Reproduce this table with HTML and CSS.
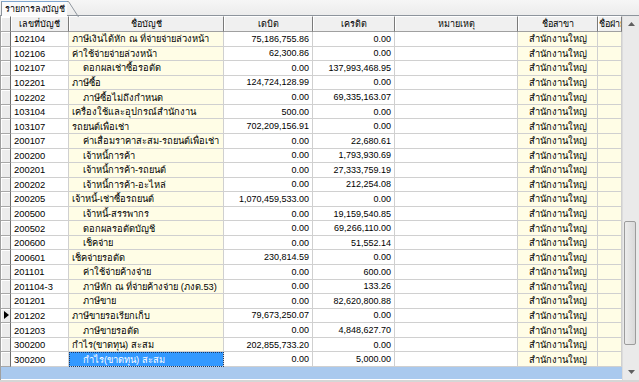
FILE: index.html
```html
<!DOCTYPE html>
<html lang="th">
<head>
<meta charset="utf-8">
<title>รายการลงบัญชี</title>
<link rel="stylesheet" href="styles.css">
</head>
<body>
<div class="window">
  <div class="tabbar">
    <div class="tab">
      <span class="tab-label">รายการลงบัญชี</span>
      <svg class="tab-edge" width="12" height="16" viewBox="0 0 12 16"><path d="M0 0.5 L1.5 0.5 L11.5 16" fill="#fbfbfb" stroke="#8d949c" stroke-width="1"/></svg>
    </div>
  </div>
  <div class="gridwrap">
    <div class="grid">
      <div class="row head">
        <div class="c ind"></div>
        <div class="c">เลขที่บัญชี</div>
        <div class="c">ชื่อบัญชี</div>
        <div class="c">เดบิต</div>
        <div class="c">เครดิต</div>
        <div class="c">หมายเหตุ</div>
        <div class="c">ชื่อสาขา</div>
        <div class="c cut">ชื่อฝ่าย</div>
      </div>

      <div class="row"><div class="c ind"></div><div class="c acc">102104</div><div class="c name">ภาษีเงินได้หัก ณ ที่จ่ายจ่ายล่วงหน้า</div><div class="c num">75,186,755.86</div><div class="c num">0.00</div><div class="c rem"></div><div class="c br">สำนักงานใหญ่</div><div class="c dv"></div></div>
      <div class="row"><div class="c ind"></div><div class="c acc">102106</div><div class="c name">ค่าใช้จ่ายจ่ายล่วงหน้า</div><div class="c num">62,300.86</div><div class="c num">0.00</div><div class="c rem"></div><div class="c br">สำนักงานใหญ่</div><div class="c dv"></div></div>
      <div class="row"><div class="c ind"></div><div class="c acc">102107</div><div class="c name in">ดอกผลเช่าซื้อรอตัด</div><div class="c num">0.00</div><div class="c num">137,993,468.95</div><div class="c rem"></div><div class="c br">สำนักงานใหญ่</div><div class="c dv"></div></div>
      <div class="row"><div class="c ind"></div><div class="c acc">102201</div><div class="c name">ภาษีซื้อ</div><div class="c num">124,724,128.99</div><div class="c num">0.00</div><div class="c rem"></div><div class="c br">สำนักงานใหญ่</div><div class="c dv"></div></div>
      <div class="row"><div class="c ind"></div><div class="c acc">102202</div><div class="c name in">ภาษีซื้อไม่ถึงกำหนด</div><div class="c num">0.00</div><div class="c num">69,335,163.07</div><div class="c rem"></div><div class="c br">สำนักงานใหญ่</div><div class="c dv"></div></div>
      <div class="row"><div class="c ind"></div><div class="c acc">103104</div><div class="c name">เครื่องใช้และอุปกรณ์สำนักงาน</div><div class="c num">500.00</div><div class="c num">0.00</div><div class="c rem"></div><div class="c br">สำนักงานใหญ่</div><div class="c dv"></div></div>
      <div class="row"><div class="c ind"></div><div class="c acc">103107</div><div class="c name">รถยนต์เพื่อเช่า</div><div class="c num">702,209,156.91</div><div class="c num">0.00</div><div class="c rem"></div><div class="c br">สำนักงานใหญ่</div><div class="c dv"></div></div>
      <div class="row"><div class="c ind"></div><div class="c acc">200107</div><div class="c name in">ค่าเสื่อมราคาสะสม-รถยนต์เพื่อเช่า</div><div class="c num">0.00</div><div class="c num">22,680.61</div><div class="c rem"></div><div class="c br">สำนักงานใหญ่</div><div class="c dv"></div></div>
      <div class="row"><div class="c ind"></div><div class="c acc">200200</div><div class="c name in">เจ้าหนี้การค้า</div><div class="c num">0.00</div><div class="c num">1,793,930.69</div><div class="c rem"></div><div class="c br">สำนักงานใหญ่</div><div class="c dv"></div></div>
      <div class="row"><div class="c ind"></div><div class="c acc">200201</div><div class="c name in">เจ้าหนี้การค้า-รถยนต์</div><div class="c num">0.00</div><div class="c num">27,333,759.19</div><div class="c rem"></div><div class="c br">สำนักงานใหญ่</div><div class="c dv"></div></div>
      <div class="row"><div class="c ind"></div><div class="c acc">200202</div><div class="c name in">เจ้าหนี้การค้า-อะไหล่</div><div class="c num">0.00</div><div class="c num">212,254.08</div><div class="c rem"></div><div class="c br">สำนักงานใหญ่</div><div class="c dv"></div></div>
      <div class="row"><div class="c ind"></div><div class="c acc">200205</div><div class="c name">เจ้าหนี้-เช่าซื้อรถยนต์</div><div class="c num">1,070,459,533.00</div><div class="c num">0.00</div><div class="c rem"></div><div class="c br">สำนักงานใหญ่</div><div class="c dv"></div></div>
      <div class="row"><div class="c ind"></div><div class="c acc">200500</div><div class="c name in">เจ้าหนี้-สรรพากร</div><div class="c num">0.00</div><div class="c num">19,159,540.85</div><div class="c rem"></div><div class="c br">สำนักงานใหญ่</div><div class="c dv"></div></div>
      <div class="row"><div class="c ind"></div><div class="c acc">200502</div><div class="c name in">ดอกผลรอตัดบัญชี</div><div class="c num">0.00</div><div class="c num">69,266,110.00</div><div class="c rem"></div><div class="c br">สำนักงานใหญ่</div><div class="c dv"></div></div>
      <div class="row"><div class="c ind"></div><div class="c acc">200600</div><div class="c name in">เช็คจ่าย</div><div class="c num">0.00</div><div class="c num">51,552.14</div><div class="c rem"></div><div class="c br">สำนักงานใหญ่</div><div class="c dv"></div></div>
      <div class="row"><div class="c ind"></div><div class="c acc">200601</div><div class="c name">เช็คจ่ายรอตัด</div><div class="c num">230,814.59</div><div class="c num">0.00</div><div class="c rem"></div><div class="c br">สำนักงานใหญ่</div><div class="c dv"></div></div>
      <div class="row"><div class="c ind"></div><div class="c acc">201101</div><div class="c name in">ค่าใช้จ่ายค้างจ่าย</div><div class="c num">0.00</div><div class="c num">600.00</div><div class="c rem"></div><div class="c br">สำนักงานใหญ่</div><div class="c dv"></div></div>
      <div class="row"><div class="c ind"></div><div class="c acc">201104-3</div><div class="c name in">ภาษีหัก ณ ที่จ่ายค้างจ่าย (ภงด.53)</div><div class="c num">0.00</div><div class="c num">133.26</div><div class="c rem"></div><div class="c br">สำนักงานใหญ่</div><div class="c dv"></div></div>
      <div class="row"><div class="c ind"></div><div class="c acc">201201</div><div class="c name in">ภาษีขาย</div><div class="c num">0.00</div><div class="c num">82,620,800.88</div><div class="c rem"></div><div class="c br">สำนักงานใหญ่</div><div class="c dv"></div></div>
      <div class="row"><div class="c ind cur"><svg width="5" height="8" viewBox="0 0 5 8"><path d="M0 0 L5 4 L0 8 Z" fill="#000"/></svg></div><div class="c acc">201202</div><div class="c name">ภาษีขายรอเรียกเก็บ</div><div class="c num">79,673,250.07</div><div class="c num">0.00</div><div class="c rem"></div><div class="c br">สำนักงานใหญ่</div><div class="c dv"></div></div>
      <div class="row"><div class="c ind"></div><div class="c acc">201203</div><div class="c name in">ภาษีขายรอตัด</div><div class="c num">0.00</div><div class="c num">4,848,627.70</div><div class="c rem"></div><div class="c br">สำนักงานใหญ่</div><div class="c dv"></div></div>
      <div class="row"><div class="c ind"></div><div class="c acc">300200</div><div class="c name">กำไร(ขาดทุน) สะสม</div><div class="c num">202,855,733.20</div><div class="c num">0.00</div><div class="c rem"></div><div class="c br">สำนักงานใหญ่</div><div class="c dv"></div></div>
      <div class="row"><div class="c ind"></div><div class="c acc">300200</div><div class="c name in sel">กำไร(ขาดทุน) สะสม</div><div class="c num">0.00</div><div class="c num">5,000.00</div><div class="c rem"></div><div class="c br">สำนักงานใหญ่</div><div class="c dv"></div></div>

      <div class="newrow"></div>
    </div>
    <div class="vscroll">
      <div class="sbtn"><svg width="7" height="4" viewBox="0 0 7 4"><path d="M0 4 L3.5 0 L7 4 Z" fill="#606060"/></svg></div>
      <div class="track">
        <div class="thumb"></div>
      </div>
      <div class="sbtn"><svg width="7" height="4" viewBox="0 0 7 4"><path d="M0 0 L3.5 4 L7 0 Z" fill="#606060"/></svg></div>
    </div>
  </div>
  <div class="bottom"></div>
</div>
</body>
</html>
```

FILE: styles.css
```css
html, body {
  margin: 0;
  padding: 0;
  background: #f0f0f0;
}

.window {
  width: 639px;
  height: 382px;
  overflow: hidden;
  font-family: "Liberation Sans", "DejaVu Sans", "Noto Sans", sans-serif;
  font-size: 8.6px;
  color: #000;
}

.tabbar {
  height: 16px;
  padding-top: 1px;
  box-sizing: border-box;
  background: linear-gradient(#f6f6f6, #ececec);
  border-bottom: 1px solid #8d949c;
  display: flex;
  align-items: flex-end;
}

.tab {
  position: relative;
  height: 15px;
  width: 66px;
  margin-left: 1px;
  margin-bottom: -1px;
  background: #fbfbfb;
  border: 1px solid #8d949c;
  border-right: none;
  border-bottom: none;
  border-top-color: #7fa6cf;
  box-sizing: border-box;
  display: flex;
  align-items: center;
  padding-left: 3px;
}

.tab-label {
  font-size: 9px;
  white-space: nowrap;
  position: relative;
  z-index: 1;
}

.tab-edge {
  position: absolute;
  left: 65px;
  top: -1px;
}

.gridwrap {
  display: flex;
  height: 364px;
  border-left: 1px solid #a0a0a0;
}

.grid {
  width: 621px;
  display: flex;
  flex-direction: column;
  background: #fff;
}

.row {
  display: grid;
  grid-template-columns: 10px 58px 155px 89px 82px 123px 80px 24px;
  height: 14.565px;
  flex: none;
}

.c {
  border-right: 1px solid #d0d0d0;
  border-bottom: 1px solid #d0d0d0;
  overflow: hidden;
  white-space: nowrap;
  display: flex;
  align-items: center;
  padding: 0 3px;
  box-sizing: border-box;
  min-width: 0;
}

.row.head {
  height: 16px;
}

.head .c {
  background: #f0f0f0;
  justify-content: center;
  border-right: 1px solid #7a7a7a;
  border-bottom: 1px solid #a0a0a0;
  border-top: 1px solid #fff;
  box-shadow: inset 1px 0 0 #fff;
  font-size: 9px;
}

.head .c.cut {
  justify-content: flex-start;
  padding-left: 1px;
}

.c.ind {
  background: #ececec;
  border-right: 1px solid #6e6e6e;
  border-bottom: 1px solid #a8a8a8;
  box-shadow: inset 1px 1px 0 #fff;
  padding: 0;
  justify-content: center;
}

.c.cur {
  padding-left: 1px;
}

.c.acc {
  background: #fff;
  font-size: 9.4px;
}

.c.name {
  background: #fffde6;
  font-size: 9.3px;
}

.c.name.in {
  padding-left: 14px;
}

.c.name.sel {
  background: #3399ff;
  color: #fff;
  outline: 1px dotted #1b3a66;
  outline-offset: -1px;
}

.c.num {
  justify-content: flex-end;
  font-size: 9px;
  background: #fff;
}

.c.rem {
  background: #fff;
}

.c.br {
  background: #fffde6;
  justify-content: center;
  font-size: 9.3px;
}

.c.dv {
  background: #fffde6;
}

.newrow {
  height: 12px;
  background: #a9c9ee;
  flex: none;
}

.vscroll {
  width: 17px;
  display: flex;
  flex-direction: column;
  background: #eaeaea;
  border-left: 1px solid #dcdcdc;
}

.sbtn {
  height: 16px;
  display: flex;
  align-items: center;
  justify-content: center;
  flex: none;
}

.track {
  flex: 1;
  position: relative;
}

.thumb {
  position: absolute;
  left: 1px;
  right: 3px;
  top: 189px;
  height: 124px;
  background: linear-gradient(90deg, #ececec, #d9d9d9);
  border: 1px solid #9c9c9c;
  border-radius: 2px;
  box-sizing: border-box;
}

.bottom {
  height: 2px;
  background: #d6d6d6;
}
```
